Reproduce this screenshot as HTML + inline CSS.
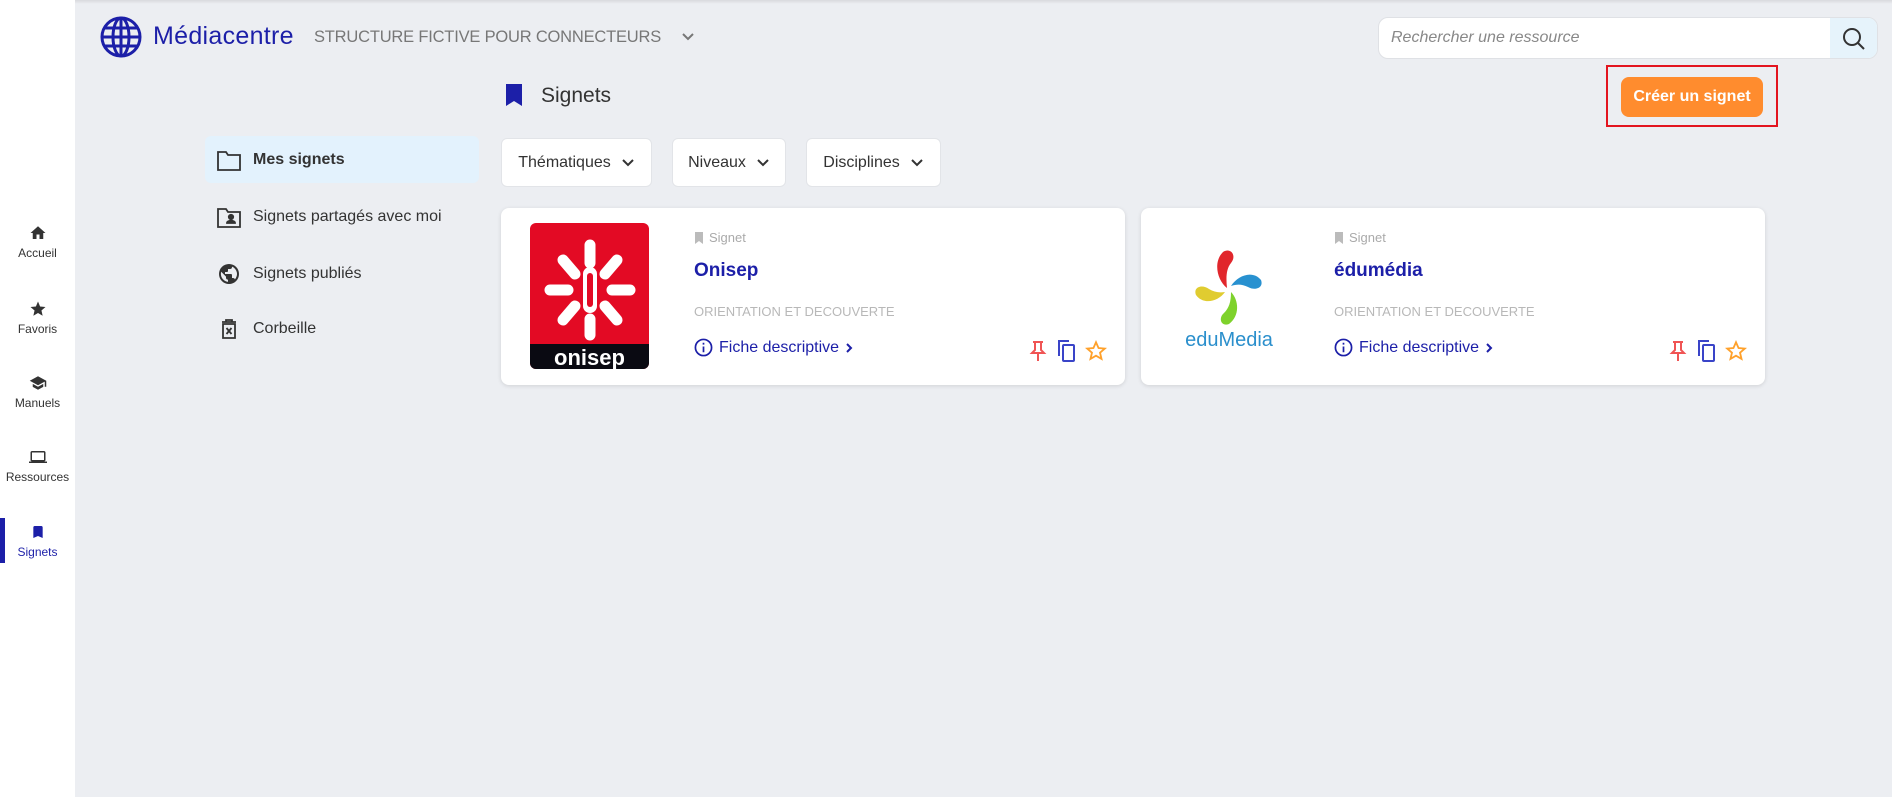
<!DOCTYPE html>
<html><head><meta charset="utf-8"><style>
*{box-sizing:border-box;margin:0;padding:0}
body{width:1892px;height:797px;overflow:hidden;background:#eceef2;font-family:"Liberation Sans",sans-serif;position:relative;color:#333}
.abs{position:absolute}
.side{left:0;top:0;width:75px;height:797px;background:#fff}
.nav{position:absolute;left:0;width:75px;text-align:center;font-size:12px;color:#333}
.nav svg{display:block;margin:0 auto 4px}
.topshadow{left:75px;top:0;width:1817px;height:4px;background:linear-gradient(#d8d9dd,#eceef2)}
.menu{position:absolute;left:205px;width:274px;height:47px;display:flex;align-items:center;padding-left:12px;font-size:16px;color:#333;border-radius:6px}
.menu svg{margin-right:12px}
.filt{position:absolute;top:138px;height:49px;background:#fff;border:1px solid #e2e4e8;border-radius:6px;display:flex;align-items:center;justify-content:center;font-size:16px;color:#333;gap:10px}
.card{position:absolute;top:208px;width:624px;height:177px;background:#fff;border-radius:8px;box-shadow:0 1px 4px rgba(0,0,0,.12)}
.lbl{position:absolute;font-size:13px;color:#aaa;display:flex;align-items:center;gap:5px}
.ttl{position:absolute;font-size:19px;font-weight:bold;color:#1c1fa8}
.cat{position:absolute;font-size:13px;color:#b8b8b8}
.fiche{position:absolute;font-size:16px;color:#1c1fa8;display:flex;align-items:center;gap:6px}
</style></head><body>
<div class="abs side"></div>
<div class="abs topshadow"></div>

<div class="nav" style="top:224px"><svg width="18" height="18" viewBox="0 0 24 24"><path d="M10 20v-6h4v6h5v-8h3L12 3 2 12h3v8z" fill="#333"/></svg>Accueil</div>
<div class="nav" style="top:300px"><svg width="18" height="18" viewBox="0 0 24 24"><path d="M12 17.3l6.2 3.7-1.6-7 5.4-4.7-7.2-.6L12 2 9.2 8.7 2 9.3l5.4 4.7-1.6 7z" fill="#333"/></svg>Favoris</div>
<div class="nav" style="top:374px"><svg width="20" height="18" viewBox="0 0 24 24"><path d="M5 13.2v4L12 21l7-3.8v-4L12 17zM12 3L1 9l11 6 9-4.9V17h2V9z" fill="#333"/></svg>Manuels</div>
<div class="nav" style="top:448px"><svg width="20" height="18" viewBox="0 0 24 24"><path d="M20 18c1.1 0 2-.9 2-2V6c0-1.1-.9-2-2-2H4c-1.1 0-2 .9-2 2v10c0 1.1.9 2 2 2H0v2h24v-2zM4 6h16v10H4z" fill="#333"/></svg>Ressources</div>
<div class="abs" style="left:0;top:518px;width:5px;height:45px;background:#1c1fa8"></div>
<div class="nav" style="top:523px;color:#1c1fa8"><svg width="16" height="18" viewBox="0 0 24 24"><path d="M17 3H7c-1.1 0-2 .9-2 2v16l7-3 7 3V5c0-1.1-.9-2-2-2z" fill="#1c1fa8"/></svg>Signets</div>

<!-- header -->
<svg class="abs" style="left:100px;top:16px" width="42" height="42" viewBox="0 0 42 42" fill="none" stroke="#1c1fa8" stroke-width="3"><circle cx="21" cy="21" r="19"/><ellipse cx="21" cy="21" rx="8" ry="19"/><line x1="21" y1="2" x2="21" y2="40"/><line x1="2" y1="21" x2="40" y2="21"/><path d="M5 12h32M5 30h32"/></svg>
<div class="abs" style="left:153px;top:22px;font-size:25px;color:#1c1fa8;letter-spacing:.3px">Médiacentre</div>
<div class="abs" style="left:314px;top:28px;font-size:16.5px;color:#777;letter-spacing:-0.2px">STRUCTURE FICTIVE POUR CONNECTEURS</div>
<svg class="abs" style="left:681px;top:32px" width="14" height="10" viewBox="0 0 14 10"><path d="M2 2l5 5 5-5" fill="none" stroke="#777" stroke-width="2"/></svg>

<div class="abs" style="left:1378px;top:17px;width:500px;height:42px;background:#fff;border:1px solid #dfe1e5;border-radius:10px;overflow:hidden">
<div style="position:absolute;left:12px;top:11px;font-size:16px;font-style:italic;color:#888">Rechercher une ressource</div>
<div style="position:absolute;right:0;top:0;width:47px;height:42px;background:#e6f3fb"></div>
<svg style="position:absolute;right:11px;top:9px" width="24" height="24" viewBox="0 0 24 24" fill="none" stroke="#333" stroke-width="2"><circle cx="10" cy="10" r="8"/><path d="M16 16l6 6"/></svg>
</div>

<!-- title -->
<svg class="abs" style="left:504px;top:83px" width="20" height="24" viewBox="0 0 20 24"><path d="M2 1h16v22l-8-5-8 5z" fill="#1c1fa8"/></svg>
<div class="abs" style="left:541px;top:84px;font-size:21px;color:#333">Signets</div>

<div class="abs" style="left:1606px;top:65px;width:172px;height:62px;border:2px solid #e3141f"></div>
<div class="abs" style="left:1621px;top:77px;width:142px;height:40px;background:#ff8c2e;border-radius:8px;color:#fff;font-weight:bold;font-size:16px;display:flex;align-items:center;justify-content:center">Créer un signet</div>

<!-- left menu -->
<div class="menu" style="top:136px;background:#e3f2fd;font-weight:bold"><svg width="24" height="22" viewBox="0 0 24 22" fill="none" stroke="#333" stroke-width="1.8"><path d="M1 3h8l2 3h12v15H1z"/></svg>Mes signets</div>
<div class="menu" style="top:193px"><svg width="24" height="22" viewBox="0 0 24 22" fill="none" stroke="#333" stroke-width="1.8"><path d="M1 3h8l2 3h12v15H1z"/><circle cx="14" cy="11" r="2.2" fill="#333"/><path d="M10 17c0-3 8-3 8 0z" fill="#333"/></svg>Signets partagés avec moi</div>
<div class="menu" style="top:250px"><svg width="24" height="24" viewBox="0 0 24 24"><path d="M12 2a10 10 0 100 20 10 10 0 000-20zm-1 17.9A8 8 0 014.2 9.8L9 14.6v1a2 2 0 002 2zm6.9-2.5A2 2 0 0016 16h-1v-3a1 1 0 00-1-1H8v-2h2a1 1 0 001-1V7h2a2 2 0 002-2v-.4a8 8 0 012.9 12.8z" fill="#333"/></svg>Signets publiés</div>
<div class="menu" style="top:305px"><svg width="24" height="24" viewBox="0 0 24 24" fill="none" stroke="#333" stroke-width="1.8"><path d="M5 5h14M9 5V3h6v2M6 7h12v14H6z"/><path d="M9.5 11l5 6M14.5 11l-5 6"/></svg>Corbeille</div>

<!-- filters -->
<div class="filt" style="left:501px;width:151px">Thématiques <svg width="14" height="10"><path d="M2 2l5 5 5-5" fill="none" stroke="#333" stroke-width="2"/></svg></div>
<div class="filt" style="left:672px;width:114px">Niveaux <svg width="14" height="10"><path d="M2 2l5 5 5-5" fill="none" stroke="#333" stroke-width="2"/></svg></div>
<div class="filt" style="left:806px;width:135px">Disciplines <svg width="14" height="10"><path d="M2 2l5 5 5-5" fill="none" stroke="#333" stroke-width="2"/></svg></div>

<!-- card 1 -->
<div class="card" style="left:501px">
<svg style="position:absolute;left:29px;top:15px" width="119" height="146" viewBox="0 0 119 146">
<rect width="119" height="146" rx="6" fill="#e30a24"/><path d="M0 121h119v19a6 6 0 01-6 6H6a6 6 0 01-6-6z" fill="#0a0a12"/>
<g stroke="#fff" stroke-width="11" stroke-linecap="round"><path d="M60 22v18M60 96v16M20 67h18M82 67h18M33 37l12 14M87 37l-12 14M33 97l12-14M87 97l-12-14"/></g>
<rect x="53" y="44" width="14" height="46" rx="7" fill="#fff"/>
<rect x="57" y="50" width="6" height="34" rx="3" fill="#e30a24"/>
<text x="59.5" y="142" font-family="Liberation Sans" font-weight="bold" font-size="22" fill="#fff" text-anchor="middle">onisep</text>
</svg>
<div class="lbl" style="left:193px;top:22px"><svg width="10" height="12"><path d="M1 0h8v12L5 9 1 12z" fill="#bbb"/></svg>Signet</div>
<div class="ttl" style="left:193px;top:52px">Onisep</div>
<div class="cat" style="left:193px;top:96px">ORIENTATION ET DECOUVERTE</div>
<div class="fiche" style="left:193px;top:130px"><svg width="19" height="19" viewBox="0 0 20 20" fill="none" stroke="#1c1fa8" stroke-width="1.8"><circle cx="10" cy="10" r="8.5"/><path d="M10 9v6M10 5v2"/></svg>Fiche descriptive <svg width="8" height="12"><path d="M2 2l4 4-4 4" fill="none" stroke="#1c1fa8" stroke-width="2"/></svg></div>
<svg style="position:absolute;left:528px;top:132px" width="18" height="22" viewBox="0 0 18 22" fill="none" stroke="#f05454" stroke-width="2"><path d="M4 2h10M6 2v8l-3 3h12l-3-3V2M9 13v8"/></svg>
<svg style="position:absolute;left:555px;top:131px" width="20" height="24" viewBox="0 0 20 24" fill="none" stroke="#3a44c8" stroke-width="2"><path d="M13 2H3v15"/><rect x="7" y="6" width="11" height="16" rx="1"/></svg>
<svg style="position:absolute;left:584px;top:132px" width="22" height="22" viewBox="0 0 24 24" fill="none" stroke="#ffa12b" stroke-width="2"><path d="M12 2.5l2.8 6.3 6.8.6-5.2 4.5 1.6 6.7L12 17.1l-6 3.5 1.6-6.7-5.2-4.5 6.8-.6z"/></svg>
</div>

<!-- card 2 -->
<div class="card" style="left:1141px">
<svg style="position:absolute;left:38px;top:34px" width="100" height="110" viewBox="0 0 100 110">
<path d="M48 46C38 38 34 20 44 10c8-5 14 4 8 11-5 6-5 15-4 25z" fill="#e1262c"/>
<path d="M52 44c7-11 22-16 30-6 3 8-6 11-13 7-6-3-11-3-17-1z" fill="#2891d0"/>
<path d="M52 50c8 8 9 24-2 32-8 3-11-6-5-11 5-5 7-11 7-21z" fill="#7ed22c"/>
<path d="M46 50c-7 10-22 13-29 3-3-8 6-11 13-6 5 3 10 4 16 3z" fill="#e0cc30"/>
<text x="50" y="104" font-family="Liberation Sans" font-size="20" fill="#2b8fcc" text-anchor="middle">eduMedia</text>
</svg>
<div class="lbl" style="left:193px;top:22px"><svg width="10" height="12"><path d="M1 0h8v12L5 9 1 12z" fill="#bbb"/></svg>Signet</div>
<div class="ttl" style="left:193px;top:52px">édumédia</div>
<div class="cat" style="left:193px;top:96px">ORIENTATION ET DECOUVERTE</div>
<div class="fiche" style="left:193px;top:130px"><svg width="19" height="19" viewBox="0 0 20 20" fill="none" stroke="#1c1fa8" stroke-width="1.8"><circle cx="10" cy="10" r="8.5"/><path d="M10 9v6M10 5v2"/></svg>Fiche descriptive <svg width="8" height="12"><path d="M2 2l4 4-4 4" fill="none" stroke="#1c1fa8" stroke-width="2"/></svg></div>
<svg style="position:absolute;left:528px;top:132px" width="18" height="22" viewBox="0 0 18 22" fill="none" stroke="#f05454" stroke-width="2"><path d="M4 2h10M6 2v8l-3 3h12l-3-3V2M9 13v8"/></svg>
<svg style="position:absolute;left:555px;top:131px" width="20" height="24" viewBox="0 0 20 24" fill="none" stroke="#3a44c8" stroke-width="2"><path d="M13 2H3v15"/><rect x="7" y="6" width="11" height="16" rx="1"/></svg>
<svg style="position:absolute;left:584px;top:132px" width="22" height="22" viewBox="0 0 24 24" fill="none" stroke="#ffa12b" stroke-width="2"><path d="M12 2.5l2.8 6.3 6.8.6-5.2 4.5 1.6 6.7L12 17.1l-6 3.5 1.6-6.7-5.2-4.5 6.8-.6z"/></svg>
</div>
</body></html>
